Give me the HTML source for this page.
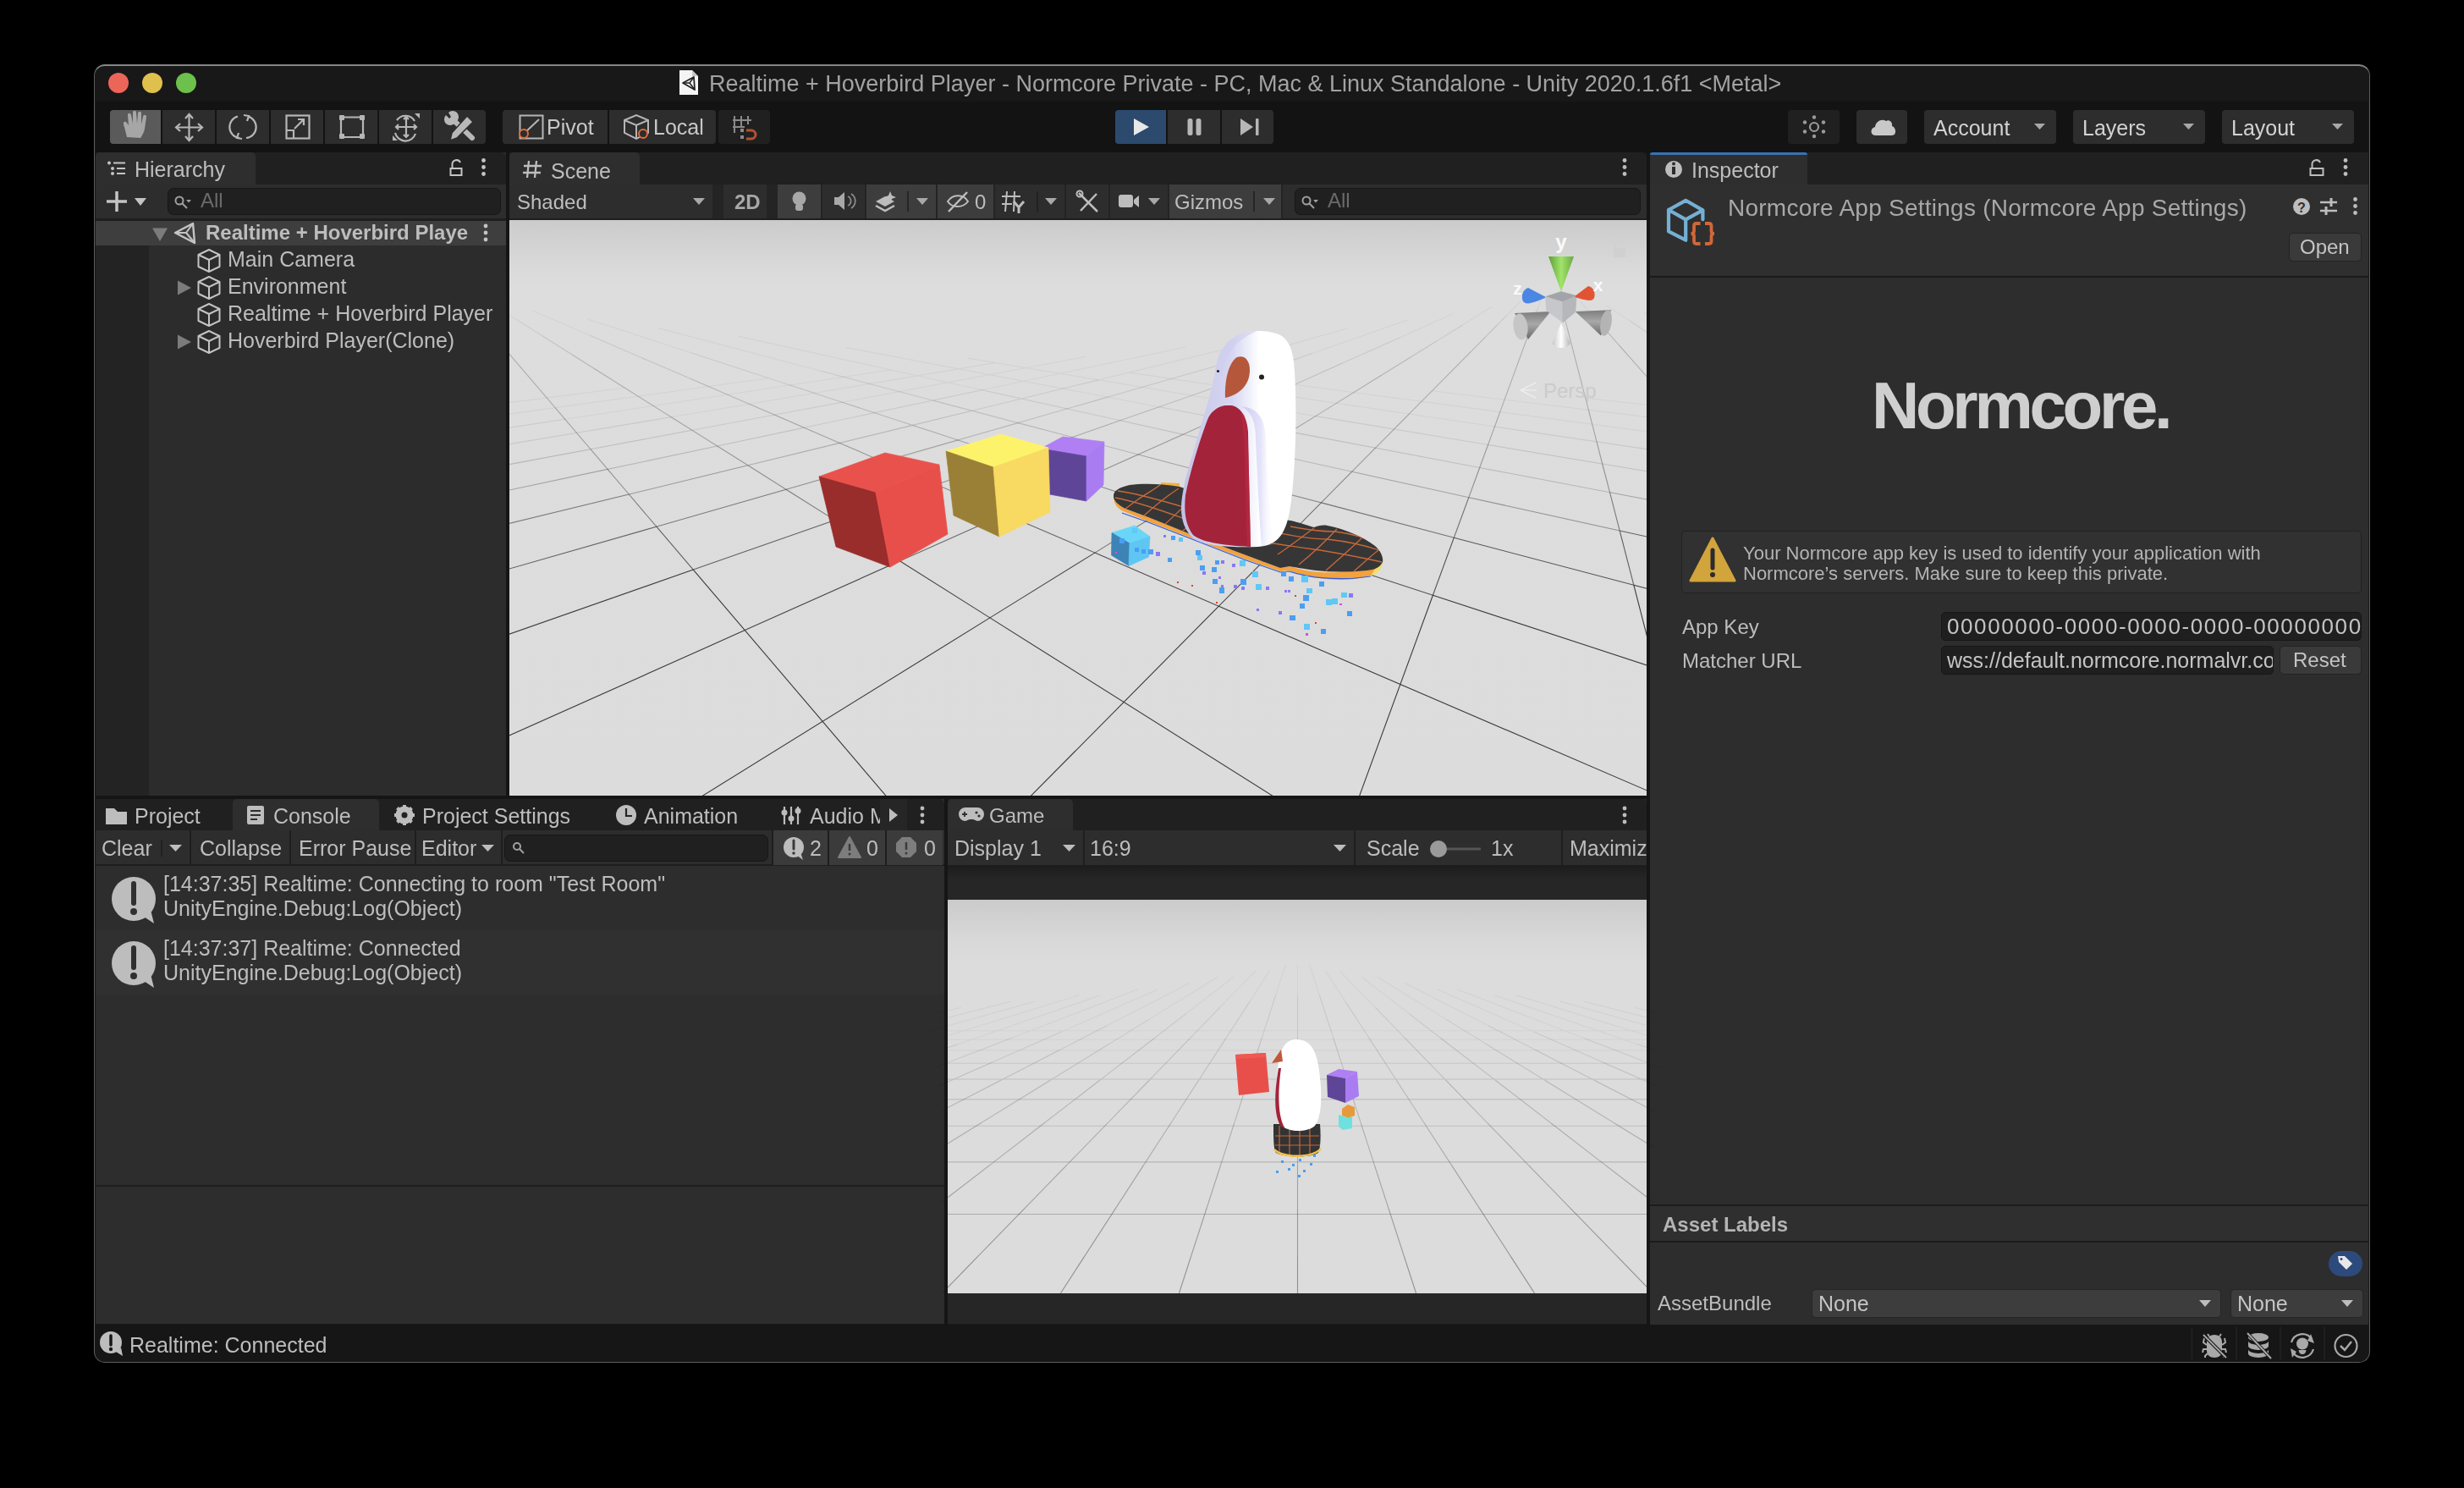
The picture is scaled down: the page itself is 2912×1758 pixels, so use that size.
<!DOCTYPE html>
<html><head><meta charset="utf-8">
<style>
*{box-sizing:border-box;margin:0;padding:0}
html,body{width:2912px;height:1758px;background:#000;overflow:hidden;font-family:"Liberation Sans",sans-serif;color:#c4c4c4;-webkit-font-smoothing:antialiased}
#root{position:absolute;left:0;top:0;width:2912px;height:1758px;transform:translateZ(0)}
.a{position:absolute}
.t{position:absolute;white-space:nowrap;font-size:25px;line-height:30px;color:#c4c4c4;filter:grayscale(1)}
.btn{position:absolute;top:130px;height:40px;background:#2d2d2d;border-radius:4px}
.tab{position:absolute;height:37px;background:#2e2e2e;border-radius:5px 5px 0 0}
svg{position:absolute;overflow:visible}
</style></head><body><div id="root">
<!-- window frame -->
<div class="a" style="left:111px;top:75.5px;width:2690px;height:1534px;border-radius:13px;background:#181818;border:1.5px solid #5c5c5c;border-top:2px solid #858585"></div>

<!-- ===== TITLEBAR ===== -->
<div class="a" style="left:128px;top:86px;width:24px;height:24px;border-radius:50%;background:#ec6559"></div>
<div class="a" style="left:168px;top:86px;width:24px;height:24px;border-radius:50%;background:#e0c04c"></div>
<div class="a" style="left:208px;top:86px;width:24px;height:24px;border-radius:50%;background:#6cc04b"></div>
<svg style="left:800px;top:80px" width="30" height="36" viewBox="800 80 30 36">
<path d="M803,83 H818 L825,90 V112 H803 Z" fill="#f4f4f4"/><path d="M818,83 V90 H825" fill="#c8c8c8"/>
<path d="M807,98 L820,91 L821,106 Z" fill="none" stroke="#222" stroke-width="1.8" stroke-linejoin="round"/>
<path d="M807,98 H815 L820,91 M815,98 L821,106" fill="none" stroke="#222" stroke-width="1.5"/>
</svg>
<div class="t" id="title" style="left:838px;top:83.5px;font-size:27px;line-height:30px;color:#a2a2a2">Realtime + Hoverbird Player - Normcore Private - PC, Mac &amp; Linux Standalone - Unity 2020.1.6f1 &lt;Metal&gt;</div>

<!-- ===== TOOLBAR ===== -->
<div class="a" style="left:113px;top:120px;width:2686px;height:60px;background:#131313"></div>
<div class="btn" style="left:130px;width:60px;background:#5a5a5a;border-radius:4px 0 0 4px"></div>
<div class="btn" style="left:192px;width:62px;border-radius:0"></div>
<div class="btn" style="left:256px;width:62px;border-radius:0"></div>
<div class="btn" style="left:320px;width:62px;border-radius:0"></div>
<div class="btn" style="left:384px;width:62px;border-radius:0"></div>
<div class="btn" style="left:448px;width:62px;border-radius:0"></div>
<div class="btn" style="left:512px;width:62px;border-radius:0 4px 4px 0"></div>
<div class="btn" style="left:594px;width:124px;border-radius:4px 0 0 4px"></div>
<div class="btn" style="left:720px;width:126px;border-radius:0 4px 4px 0"></div>
<div class="btn" style="left:849px;width:61px;background:#202020"></div>
<div class="t" style="left:646px;top:135px;font-size:25px;color:#c8c8c8">Pivot</div>
<div class="t" style="left:772px;top:135px;font-size:25px;color:#c8c8c8">Local</div>
<div class="btn" style="left:1318px;width:60px;background:#2b4a6d;border-radius:4px 0 0 4px"></div>
<div class="btn" style="left:1380px;width:62px;border-radius:0"></div>
<div class="btn" style="left:1444px;width:61px;border-radius:0 4px 4px 0"></div>
<div class="btn" style="left:2113px;width:61px;background:#202020"></div>
<div class="btn" style="left:2194px;width:60px"></div>
<div class="btn" style="left:2274px;width:156px"></div>
<div class="btn" style="left:2450px;width:156px"></div>
<div class="btn" style="left:2626px;width:156px"></div>
<div class="t" style="left:2285px;top:136px;font-size:25px;color:#d2d2d2">Account</div>
<div class="t" style="left:2461px;top:136px;font-size:25px;color:#d2d2d2">Layers</div>
<div class="t" style="left:2637px;top:136px;font-size:25px;color:#d2d2d2">Layout</div>
<svg style="left:112px;top:120px" width="2688" height="60" viewBox="112 120 2688 60">
<g fill="#a6a6a6">
<!-- hand -->
<path d="M150,162 L147,150 C145,146 146,143 149,144 L152,148 L151,136 C151,133 154,133 155,136 L157,146 L157,133 C157,130 161,130 161,133 L162,146 L163,134 C163,131 167,131 167,134 L167,147 L169,138 C169,135 173,135 173,138 L171,152 C170,157 168,160 166,163 Z"/>
</g>
<g fill="none" stroke="#b6b6b6" stroke-width="2.2">
<!-- move -->
<path d="M223.5,136 V165 M209,150.5 H238"/>
<path d="M219,140 L223.5,135 L228,140 M219,161 L223.5,166 L228,161 M213,146 L208,150.5 L213,155 M234,146 L239,150.5 L234,155"/>
<!-- rotate -->
<path d="M281,137.5 A13,13 0 0 0 283,163 M293,137.5 A13,13 0 0 1 291,163"/>
<path d="M288,136 L294,137 L292,143 M286,164 L280,163 L282,157"/>
<!-- scale -->
<rect x="338.5" y="136.5" width="27" height="27"/>
<path d="M338.5,154 H347 V163.5 M348,152 L359,141 M352,141 H359 V148"/>
<!-- rect -->
<path d="M406,138.5 H426 M406,162 H426 M403,141.5 V159 M429,141.5 V159"/>
</g>
<g fill="#b6b6b6">
<rect x="401" y="136" width="6" height="6" rx="1"/><rect x="425" y="136" width="6" height="6" rx="1"/><rect x="401" y="158" width="6" height="6" rx="1"/><rect x="425" y="158" width="6" height="6" rx="1"/>
</g>
<g fill="none" stroke="#b6b6b6" stroke-width="2.2">
<!-- transform -->
<path d="M469,142 A12.5,12.5 0 0 1 490,143 M491,158 A12.5,12.5 0 0 1 467,157"/>
<path d="M480,138 V162 M468,150 H492 M477,141 L480,138 L483,141 M477,159 L480,162 L483,159 M471,147 L468,150 L471,153 M489,147 L492,150 L489,153"/>
<path d="M490,134 L496,134 L496,140 Z M464,166 L464,160 L470,166 Z" fill="#b6b6b6" stroke="none"/>
<!-- custom tools -->
</g>
<path d="M536,142 L558,163" stroke="#b8b8b8" stroke-width="6" stroke-linecap="round"/>
<path d="M527,136 A7,7 0 0 0 537,146 L540,143 A7,7 0 0 0 530,133 L533,138 L531,140 Z" fill="#b8b8b8"/>
<path d="M552,137 L559,144 L540,163 L532,166 L534,157 Z" fill="#b8b8b8" stroke="#2d2d2d" stroke-width="1.5"/>
<g>
<!-- pivot icon -->
<rect x="614.5" y="136.5" width="27" height="27" fill="none" stroke="#b6b6b6" stroke-width="2"/>
<path d="M619,158 L637,141" stroke="#b6b6b6" stroke-width="2"/>
<circle cx="619" cy="158" r="5" fill="#2d2d2d" stroke="#e0693a" stroke-width="2"/>
<!-- local icon -->
<path d="M738,142 L752,136 L766,142 L766,157 L752,164 L738,157 Z M738,142 L752,148 L766,142 M752,148 V164" fill="none" stroke="#b6b6b6" stroke-width="2"/>
<circle cx="760" cy="158" r="5" fill="#2d2d2d" stroke="#e0693a" stroke-width="2"/>
<!-- grid snap -->
<path d="M868,137 V157 M876,137 V150 M866,142 H888 M866,150 H880 M884,137 V147" stroke="#8a8a8a" stroke-width="2" fill="none"/>
<rect x="875" y="152" width="4" height="4" fill="#8a8a8a"/><rect x="875" y="160" width="4" height="4" fill="#8a8a8a"/>
<path d="M882,154 H888 A5,5 0 0 1 888,164 H882" stroke="#b5522f" stroke-width="3" fill="none"/>
<!-- play/pause/step -->
<path d="M1340,140 L1358,150 L1340,160 Z" fill="#e8e8e8"/>
<rect x="1403.5" y="140" width="6" height="20" rx="2.5" fill="#b6b6b6"/><rect x="1413.5" y="140" width="6" height="20" rx="2.5" fill="#b6b6b6"/>
<path d="M1466,140 L1481,150 L1466,160 Z" fill="#b6b6b6"/><rect x="1484" y="140" width="3.5" height="20" rx="1" fill="#b6b6b6"/>
<!-- sun -->
<g fill="#9a9a9a"><circle cx="2144" cy="138.5" r="2.2"/><circle cx="2144" cy="161" r="2.2"/><circle cx="2133" cy="144.5" r="2.2"/><circle cx="2155" cy="144.5" r="2.2"/><circle cx="2133" cy="155.5" r="2.2"/><circle cx="2155" cy="155.5" r="2.2"/></g>
<circle cx="2144" cy="150" r="5" fill="none" stroke="#9a9a9a" stroke-width="2.2"/>
<!-- cloud -->
<path d="M2216,160 C2210,160 2210,151 2216,150 C2217,143 2224,140 2229,143 C2232,141 2237,144 2236,149 C2241,150 2242,160 2236,160 Z" fill="#c8c8c8"/>
<!-- dropdown arrows -->
<path d="M2404,146 H2417 L2410.5,153 Z M2580,146 H2593 L2586.5,153 Z M2756,146 H2769 L2762.5,153 Z" fill="#a8a8a8"/>
</svg>
<!-- ===== HIERARCHY ===== -->
<div class="a" style="left:113px;top:180px;width:485px;height:760px;background:#2c2c2c"></div>
<div class="a" style="left:113px;top:180px;width:485px;height:38px;background:#202020;border-radius:0 6px 0 0"></div>
<div class="tab" style="left:113px;top:180px;width:189px;height:38px"></div>
<div class="a" style="left:113px;top:218px;width:485px;height:41px;background:#2d2d2d"></div>
<div class="a" style="left:113px;top:258px;width:485px;height:3px;background:#1e1e1e"></div>
<div class="a" style="left:198px;top:222px;width:394px;height:32px;background:#202020;border:1.5px solid #171717;border-radius:7px"></div>
<div class="t" style="left:237px;top:222px;font-size:24px;color:#6a6a6a">All</div>
<div class="t" style="left:159px;top:185px;font-size:25px;color:#bdbdbd">Hierarchy</div>
<div class="a" style="left:113px;top:261px;width:485px;height:29px;background:#3e3e3e"></div>
<div class="a" style="left:113px;top:290px;width:63px;height:650px;background:#232323"></div>
<div class="t" style="left:243px;top:260px;font-size:24px;font-weight:bold;color:#bdbdbd">Realtime + Hoverbird Playe</div>
<div class="t" style="left:269px;top:291px;font-size:25px;color:#bdbdbd">Main Camera</div>
<div class="t" style="left:269px;top:323px;font-size:25px;color:#bdbdbd">Environment</div>
<div class="t" style="left:269px;top:355px;font-size:25px;color:#bdbdbd">Realtime + Hoverbird Player</div>
<div class="t" style="left:269px;top:387px;font-size:25px;color:#bdbdbd">Hoverbird Player(Clone)</div>
<svg style="left:112px;top:180px" width="490" height="260" viewBox="112 180 490 260">
<!-- list icon -->
<g fill="#c4c4c4"><circle cx="129" cy="192.5" r="2"/><circle cx="133" cy="199" r="2"/><circle cx="133" cy="205" r="2"/></g>
<path d="M134,192.5 H148 M138,199 H148 M138,205 H148" stroke="#c4c4c4" stroke-width="2"/>
<!-- lock -->
<path d="M532.5,207 V199 H545.5 V207 Z M534.5,199 V194 A5,5 0 0 1 544,192" fill="none" stroke="#c4c4c4" stroke-width="2"/>
<g fill="#c4c4c4"><circle cx="571.5" cy="189.5" r="2.4"/><circle cx="571.5" cy="197.5" r="2.4"/><circle cx="571.5" cy="205.5" r="2.4"/></g>
<!-- plus, arrow -->
<path d="M138,226 V250 M126,238 H150" stroke="#c4c4c4" stroke-width="3.5"/>
<path d="M159,234 H173 L166,243 Z" fill="#c4c4c4"/>
<!-- search -->
<circle cx="212" cy="237" r="4.5" fill="none" stroke="#a0a0a0" stroke-width="2"/>
<path d="M215,240 L221,246" stroke="#a0a0a0" stroke-width="2"/><path d="M220,236 H226 L223,239.5 Z" fill="#a0a0a0"/>
<!-- row0 -->
<path d="M180,269.5 H198 L189,285 Z" fill="#7c7c7c"/>
<path d="M207,275 L228,264 L230,287 Z" fill="none" stroke="#c4c4c4" stroke-width="2.4" stroke-linejoin="round"/>
<path d="M207,275 L220,275 L228,264 M220,275 L230,287" fill="none" stroke="#c4c4c4" stroke-width="2"/>
<g fill="#c4c4c4"><circle cx="574" cy="267" r="2.4"/><circle cx="574" cy="275" r="2.4"/><circle cx="574" cy="283" r="2.4"/></g>
<!-- cubes -->
<g fill="none" stroke="#c4c4c4" stroke-width="2" stroke-linejoin="round">
<path id="cb" d="M234.5,301 L247,295 L259.5,301 L259.5,315 L247,321 L234.5,315 Z M234.5,301 L247,307 L259.5,301 M247,307 V321"/>
<use href="#cb" y="32"/><use href="#cb" y="64"/><use href="#cb" y="96"/>
</g>
<path d="M210,331.5 V348.5 L226,340 Z M210,395.5 V412.5 L226,404 Z" fill="#7c7c7c"/>
</svg>

<!-- ===== SCENE ===== -->
<div class="a" style="left:602px;top:180px;width:1344px;height:38px;background:#202020;border-radius:0 6px 0 0"></div>
<div class="tab" style="left:602px;top:180px;width:154px;height:38px"></div>
<div class="t" style="left:651px;top:187px;font-size:25px;color:#bdbdbd">Scene</div>
<div class="a" style="left:602px;top:218px;width:1344px;height:40px;background:#2d2d2d"></div>
<div class="a" style="left:602px;top:258px;width:1344px;height:2px;background:#1e1e1e"></div>
<div class="a" style="left:842px;top:218px;width:13px;height:40px;background:#242424"></div>
<div class="a" style="left:906px;top:218px;width:13px;height:40px;background:#242424"></div>
<div class="a" style="left:919px;top:218px;width:51px;height:40px;background:#3d3d3d"></div>
<div class="a" style="left:970px;top:218px;width:2px;height:40px;background:#242424"></div>
<div class="a" style="left:1022px;top:218px;width:2px;height:40px;background:#242424"></div>
<div class="a" style="left:1024px;top:218px;width:82px;height:40px;background:#3d3d3d"></div>
<div class="a" style="left:1106px;top:218px;width:2px;height:40px;background:#242424"></div>
<div class="a" style="left:1108px;top:218px;width:66px;height:40px;background:#3d3d3d"></div>
<div class="a" style="left:1174px;top:218px;width:2px;height:40px;background:#242424"></div>
<div class="a" style="left:1258px;top:218px;width:2px;height:40px;background:#242424"></div>
<div class="a" style="left:1310px;top:218px;width:2px;height:40px;background:#242424"></div>
<div class="a" style="left:1380px;top:218px;width:2px;height:40px;background:#242424"></div>
<div class="a" style="left:1382px;top:218px;width:132px;height:40px;background:#3d3d3d"></div>
<div class="a" style="left:1514px;top:218px;width:2px;height:40px;background:#242424"></div>
<div class="a" style="left:1530px;top:222px;width:409px;height:32px;background:#202020;border:1.5px solid #171717;border-radius:7px"></div>
<div class="t" style="left:1569px;top:222px;font-size:24px;color:#6a6a6a">All</div>
<div class="t" style="left:611px;top:224px;font-size:24px;color:#bdbdbd">Shaded</div>
<div class="t" style="left:868px;top:224px;font-size:24px;font-weight:bold;color:#a8a8a8">2D</div>
<div class="t" style="left:1152px;top:224px;font-size:24px;color:#bdbdbd">0</div>
<div class="t" style="left:1388px;top:224px;font-size:24px;color:#bdbdbd">Gizmos</div>
<svg style="left:602px;top:180px" width="1344" height="80" viewBox="602 180 1344 80">
<!-- # icon -->
<path d="M625,190 L623,210 M634,190 L632,210 M619,196 H640 M618,204 H639" stroke="#bdbdbd" stroke-width="2.3"/>
<g fill="#bdbdbd"><circle cx="1920" cy="189.5" r="2.4"/><circle cx="1920" cy="197.5" r="2.4"/><circle cx="1920" cy="205.5" r="2.4"/></g>
<g fill="#a8a8a8">
<path d="M819,234 H833 L826,242 Z M1083,234 H1097 L1090,242 Z M1235,234 H1249 L1242,242 Z M1357,234 H1371 L1364,242 Z M1493,234 H1507 L1500,242 Z"/>
<path d="M1913,234 H1927 L1920,242 Z" opacity="0"/>
<!-- bulb -->
<circle cx="944.5" cy="234.5" r="8"/><rect x="940" y="241" width="9" height="8" rx="3"/>
<!-- audio -->
<path d="M986,233 H991 L998,227 V248 L991,242 H986 Z"/>
</g>
<path d="M1002,232 A6,6 0 0 1 1002,243 M1006,229 A10,10 0 0 1 1006,246" fill="none" stroke="#8a8a8a" stroke-width="1.8"/>
<path d="M1073,226 V250" stroke="#1e1e1e" stroke-width="1.5"/>
<path d="M1226,226 V250 M1482,226 V250" stroke="#1e1e1e" stroke-width="1.5"/>
<!-- effects -->
<path d="M1035,238 L1046,232 L1057,238 L1046,244 Z" fill="#bdbdbd"/>
<path d="M1035,243 L1046,249 L1057,243" fill="none" stroke="#bdbdbd" stroke-width="2.5"/>
<path d="M1052,226 L1054,231 L1059,233 L1054,235 L1052,240 L1050,235 L1045,233 L1050,231 Z" fill="#bdbdbd"/>
<!-- hidden eye -->
<path d="M1120,238 C1125,230 1138,228 1144,238 C1138,246 1125,246 1120,238 Z" fill="none" stroke="#bdbdbd" stroke-width="2"/>
<path d="M1121,250 L1143,227" stroke="#bdbdbd" stroke-width="2.5"/>
<!-- grid -->
<path d="M1190,226 L1188,250 M1199,226 L1198,250 M1184,232 H1206 M1184,241 H1196" stroke="#bdbdbd" stroke-width="2"/>
<path d="M1198,238 L1204,245 L1210,238 M1204,245 V252" stroke="#bdbdbd" stroke-width="3" fill="none"/>
<!-- tools -->
<path d="M1275,228 L1297,250 M1296,229 L1277,249" stroke="#bdbdbd" stroke-width="2.5"/>
<circle cx="1276" cy="229" r="3.5" fill="none" stroke="#bdbdbd" stroke-width="2"/>
<!-- camera -->
<rect x="1322" y="230" width="17" height="15" rx="3" fill="#bdbdbd"/><path d="M1340,236 L1346,231 V245 L1340,240 Z" fill="#bdbdbd"/>
<!-- search -->
<circle cx="1544" cy="237" r="4.5" fill="none" stroke="#a0a0a0" stroke-width="2"/>
<path d="M1547,240 L1553,246" stroke="#a0a0a0" stroke-width="2"/><path d="M1552,236 H1558 L1555,239.5 Z" fill="#a0a0a0"/>
</svg>
<svg style="left:602px;top:260px" width="1344" height="680" viewBox="602 260 1344 680">
<defs>
<linearGradient id="sky" x1="0" y1="260" x2="0" y2="940" gradientUnits="userSpaceOnUse">
<stop offset="0" stop-color="#cbcbcb"/><stop offset="0.085" stop-color="#dadada"/><stop offset="0.12" stop-color="#dddddd"/><stop offset="1" stop-color="#dcdcdc"/>
</linearGradient>
<linearGradient id="bodyg" x1="1395" y1="0" x2="1532" y2="0" gradientUnits="userSpaceOnUse">
<stop offset="0" stop-color="#bfbfe4"/><stop offset="0.12" stop-color="#c9c9ea"/><stop offset="0.45" stop-color="#d6d6f2"/><stop offset="0.68" stop-color="#ffffff"/><stop offset="1" stop-color="#ffffff"/>
</linearGradient>
<linearGradient id="lavg" x1="1474" y1="0" x2="1506" y2="0" gradientUnits="userSpaceOnUse"><stop offset="0" stop-color="#d2d2f4"/><stop offset="0.5" stop-color="#e4e4fa"/><stop offset="1" stop-color="#ffffff" stop-opacity="0"/></linearGradient>
<clipPath id="sc"><rect x="602" y="260" width="1344" height="680"/></clipPath>
</defs>
<g clip-path="url(#sc)">
<rect x="602" y="260" width="1344" height="680" fill="url(#sky)"/>
<path d="M600.7 371.5L612.6 378.9M630.3 367.6L696.6 396.1M693.9 376.7L817.3 417.0M778.0 387.6L970.0 438.2M872.9 397.4L1160.6 460.8M999.3 410.4L1369.9 480.7M1143.5 423.1L1554.8 491.6M1334.6 440.1L1766.4 504.0M1469.0 446.1L2011.2 518.5M1692.4 461.8L1993.4 498.4M1873.6 470.2L1978.9 481.9M536.7 484.0L738.5 458.2M538.4 498.0L908.3 446.7M667.7 495.3L1052.4 437.0M793.2 492.7L1176.2 428.6M995.3 475.2L1283.6 421.3M1160.6 460.8L1401.1 410.0M1298.3 448.9L1510.3 397.3M1441.1 431.2L1592.9 387.7M1550.0 417.8L1663.5 378.1M1653.5 399.2L1717.0 370.8M1728.5 384.0L1762.6 362.8M1781.4 371.9L1797.0 356.1M1817.8 363.6L1821.9 352.4M1846.0 363.4L1843.2 352.3M1879.7 369.7L1867.4 355.8M1927.3 379.9L1898.6 360.9M1946.0 370.7L1942.8 369.2" stroke="#1e1e1e" stroke-opacity="0.05" stroke-width="1.1" fill="none"/>
<path d="M612.6 378.9L640.7 396.6M696.6 396.1L758.4 422.7M817.3 417.0L933.6 455.0M970.0 438.2L1102.6 473.1M1160.6 460.8L1323.8 496.8M1369.9 480.7L1524.9 510.1M1554.8 491.6L1758.6 525.5M1766.4 504.0L2033.4 543.6M540.4 514.6L667.7 495.3M542.7 534.6L793.2 492.7M818.0 508.3L995.3 475.2M950.3 505.3L1160.6 460.8M1148.9 485.3L1298.3 448.9M1309.1 469.1L1441.1 431.2M1469.0 446.1L1550.0 417.8M1586.6 429.1L1653.5 399.2M1698.8 402.4L1728.5 384.0M1769.8 383.6L1781.4 371.9M1814.3 373.3L1817.8 363.6M1848.5 373.0L1846.0 363.4M1891.0 382.5L1879.7 369.7M1946.5 392.7L1927.3 379.9" stroke="#1e1e1e" stroke-opacity="0.10" stroke-width="1.1" fill="none"/>
<path d="M640.7 396.6L675.7 418.7M758.4 422.7L817.5 448.1M933.6 455.0L995.3 475.2M1102.6 473.1L1203.1 499.6M1323.8 496.8L1487.9 533.0M1524.9 510.1L1748.7 552.5M1758.6 525.5L2062.0 576.0M697.9 530.7L818.0 508.3M847.7 527.0L950.3 505.3M1078.6 502.4L1148.9 485.3M1203.1 499.6L1309.1 469.1M1369.9 480.7L1469.0 446.1M1530.3 454.2L1586.6 429.1M1667.5 421.7L1698.8 402.4M1755.5 398.1L1769.8 383.6M1810.7 383.2L1814.3 373.3M1850.5 380.6L1848.5 373.0M1900.5 393.2L1891.0 382.5" stroke="#1e1e1e" stroke-opacity="0.15" stroke-width="1.1" fill="none"/>
<path d="M675.7 418.7L701.9 435.2M817.5 448.1L885.2 477.3M995.3 475.2L1078.6 502.4M1203.1 499.6L1345.1 537.0M1487.9 533.0L1597.8 557.2M1748.7 552.5L1902.5 581.7M545.6 559.2L697.9 530.7M718.1 554.4L847.7 527.0M992.4 523.4L1078.6 502.4M1132.2 519.9L1203.1 499.6M1323.8 496.8L1369.9 480.7M1505.4 465.4L1530.3 454.2M1632.7 443.3L1667.5 421.7M1738.4 415.3L1755.5 398.1M1807.8 391.1L1810.7 383.2M1852.3 387.8L1850.5 380.6M1913.7 408.2L1900.5 393.2" stroke="#1e1e1e" stroke-opacity="0.20" stroke-width="1.1" fill="none"/>
<path d="M599.2 415.0L656.1 481.7M701.9 435.2L793.2 492.7M885.2 477.3L915.1 490.1M1078.6 502.4L1132.2 519.9M883.9 549.8L992.4 523.4M1267.4 516.5L1323.8 496.8M1441.0 494.2L1505.4 465.4M1554.8 491.6L1632.7 443.3M1665.3 489.1L1738.4 415.3M1772.8 486.6L1807.8 391.1M1877.3 484.2L1852.3 387.8M1947.8 446.8L1913.7 408.2" stroke="#1e1e1e" stroke-opacity="0.25" stroke-width="1.1" fill="none"/>
<path d="M656.1 481.7L697.9 530.7M793.2 492.7L847.7 527.0M915.1 490.1L992.4 523.4M1132.2 519.9L1197.1 541.1M1345.1 537.0L1440.8 562.2M1597.8 557.2L1735.8 587.7M1902.5 581.7L2100.2 619.2M549.2 590.1L718.1 554.4M1043.4 545.4L1132.2 519.9M1398.2 513.2L1441.0 494.2M1487.9 533.0L1554.8 491.6M1625.6 529.2L1665.3 489.1M1758.6 525.5L1772.8 486.6M1887.0 521.9L1877.3 484.2" stroke="#1e1e1e" stroke-opacity="0.30" stroke-width="1.1" fill="none"/>
<path d="M697.9 530.7L718.1 554.4M847.7 527.0L883.9 549.8M992.4 523.4L1043.4 545.4M743.3 584.0L883.9 549.8M1197.1 541.1L1267.4 516.5M1345.1 537.0L1398.2 513.2M1440.8 562.2L1487.9 533.0M1597.8 557.2L1625.6 529.2M1748.7 552.5L1758.6 525.5M1893.7 548.0L1887.0 521.9" stroke="#1e1e1e" stroke-opacity="0.35" stroke-width="1.1" fill="none"/>
<path d="M718.1 554.4L743.3 584.0M883.9 549.8L929.0 578.2M1043.4 545.4L1106.8 572.6M1197.1 541.1L1277.3 567.3M1440.8 562.2L1561.4 593.9M1735.8 587.7L1914.2 627.0M929.0 578.2L1043.4 545.4M1106.8 572.6L1197.1 541.1M1277.3 567.3L1345.1 537.0M1735.8 587.7L1748.7 552.5M1902.5 581.7L1893.7 548.0" stroke="#1e1e1e" stroke-opacity="0.40" stroke-width="1.1" fill="none"/>
<path d="M1106.8 572.6L1187.5 607.4M1277.3 567.3L1378.9 600.5M1187.5 607.4L1277.3 567.3M1378.9 600.5L1440.8 562.2M1561.4 593.9L1597.8 557.2" stroke="#1e1e1e" stroke-opacity="0.45" stroke-width="1.1" fill="none"/>
<path d="M743.3 584.0L775.8 622.2M929.0 578.2L986.8 614.6M553.9 630.1L743.3 584.0M775.8 622.2L929.0 578.2M986.8 614.6L1106.8 572.6M1914.2 627.0L1902.5 581.7" stroke="#1e1e1e" stroke-opacity="0.50" stroke-width="1.1" fill="none"/>
<path d="M1378.9 600.5L1511.9 644.0M1561.4 593.9L1718.3 635.3M1293.9 653.1L1378.9 600.5M1511.9 644.0L1561.4 593.9M1718.3 635.3L1735.8 587.7" stroke="#1e1e1e" stroke-opacity="0.55" stroke-width="1.1" fill="none"/>
<path d="M986.8 614.6L1063.4 662.8M1187.5 607.4L1293.9 653.1M1063.4 662.8L1187.5 607.4" stroke="#1e1e1e" stroke-opacity="0.60" stroke-width="1.1" fill="none"/>
<path d="M775.8 622.2L819.3 673.1M1914.2 627.0L2153.8 679.9M560.3 684.0L775.8 622.2M819.3 673.1L986.8 614.6M1930.8 691.2L1914.2 627.0" stroke="#1e1e1e" stroke-opacity="0.65" stroke-width="1.1" fill="none"/>
<path d="M1511.9 644.0L1693.4 703.3M1718.3 635.3L1930.8 691.2M1693.4 703.3L1718.3 635.3" stroke="#1e1e1e" stroke-opacity="0.70" stroke-width="1.1" fill="none"/>
<path d="M1293.9 653.1L1440.4 716.2M1440.4 716.2L1511.9 644.0" stroke="#1e1e1e" stroke-opacity="0.75" stroke-width="1.1" fill="none"/>
<path d="M1063.4 662.8L1169.9 729.9M880.3 744.6L1063.4 662.8M1169.9 729.9L1293.9 653.1" stroke="#1e1e1e" stroke-opacity="0.80" stroke-width="1.1" fill="none"/>
<path d="M583.0 877.4L606.7 1078.7M819.3 673.1L1126.3 1033.2M1169.9 729.9L1587.4 992.8M1440.4 716.2L1999.4 956.7M1693.4 703.3L1956.1 789.1M1930.8 691.2L2234.5 771.2M569.3 760.5L819.3 673.1M583.0 877.4L880.3 744.6M606.7 1078.7L1169.9 729.9M1126.3 1033.2L1440.4 716.2M1587.4 992.8L1693.4 703.3M1956.1 789.1L1930.8 691.2" stroke="#1e1e1e" stroke-opacity="0.85" stroke-width="1.1" fill="none"/>
<!-- purple cube -->
<polygon points="1230,530 1256,516 1305,522 1284,539" fill="#b07ff4" stroke="#b07ff4" stroke-width="0.7" stroke-linejoin="round"/>
<polygon points="1230,530 1284,539 1284,592 1235,583" fill="#5f4597" stroke="#5f4597" stroke-width="0.7" stroke-linejoin="round"/>
<polygon points="1284,539 1305,522 1304,573 1284,592" fill="#a97cf2" stroke="#a97cf2" stroke-width="0.7" stroke-linejoin="round"/>
<!-- yellow cube -->
<polygon points="1118,533 1183,513 1239,529 1174,552" fill="#fdf36b" stroke="#fdf36b" stroke-width="0.7" stroke-linejoin="round"/>
<polygon points="1118,533 1174,552 1181,634 1127,609" fill="#9a8036" stroke="#9a8036" stroke-width="0.7" stroke-linejoin="round"/>
<polygon points="1174,552 1239,529 1241,605 1181,634" fill="#f8d961" stroke="#f8d961" stroke-width="0.7" stroke-linejoin="round"/>
<!-- red cube -->
<polygon points="968,563 1046,535 1110,549 1035,582" fill="#e9524c" stroke="#e9524c" stroke-width="0.7" stroke-linejoin="round"/>
<polygon points="968,563 1035,582 1052,670 988,646" fill="#982d2b" stroke="#982d2b" stroke-width="0.7" stroke-linejoin="round"/>
<polygon points="1035,582 1110,549 1120,631 1052,670" fill="#e94f4a" stroke="#e94f4a" stroke-width="0.7" stroke-linejoin="round"/>
<!-- hoverboard rim + top -->
<path d="M1316,586 C1316,597 1322,602 1330,605 L1357,616 L1414,638 L1470,660 L1513,675 L1524,674 C1535,678 1545,681 1560,683 C1580,686 1600,686 1620,680 C1630,676 1634,670 1634,660 L1626,664 C1600,676 1580,677 1560,676 C1545,675 1535,672 1524,669 L1513,671 L1470,655 L1414,634 L1357,611 L1330,601 C1322,597 1317,592 1316,586 Z" fill="#f2a23f"/>
<path d="M1326,606 L1357,617 L1414,639 L1470,661 L1513,676 L1524,675 C1545,682 1580,687 1620,681" fill="none" stroke="#2f5bd8" stroke-width="1.2"/>
<path d="M1626,671 C1630,668 1634,664 1634,660 L1633,668 C1630,675 1626,678 1620,680 Z" fill="#f6e05a"/>
<path d="M1372,570 L1394,571 L1394,577 L1372,573 Z" fill="#f2b040"/>
<clipPath id="boardclip"><path id="boardtop" d="M1316,586 C1316,580 1322,576 1335,573 C1350,571 1370,571 1394,575 L1400,577 L1520,614 C1535,617 1545,621 1553,623 C1558,621 1563,620 1569,621 C1590,625 1612,635 1625,645 C1633,652 1635,660 1634,664 C1630,671 1625,673 1615,674 C1595,676 1575,676 1555,674 C1540,672 1530,670 1524,669 L1513,671 L1470,655 L1414,634 L1357,611 L1330,601 C1322,597 1316,592 1316,586 Z"/></clipPath>
<use href="#boardtop" fill="#363636"/>
<g stroke="#c8683a" stroke-width="1.3" fill="none" clip-path="url(#boardclip)">
<path d="M1318,588 C1340,592 1370,602 1400,613 M1321,580 C1345,583 1375,592 1402,600 M1330,601 L1345,590 C1355,583 1365,578 1372,572 M1350,611 C1362,600 1376,588 1393,577 M1375,621 C1385,612 1395,602 1402,596 M1395,629 L1402,624"/>
<path d="M1485,644 L1520,617 M1510,655 C1525,645 1540,633 1553,624 M1535,667 C1550,655 1566,640 1580,625 M1567,674 C1583,660 1600,645 1612,633 M1600,675 C1612,665 1625,652 1632,648"/>
<path d="M1490,639 C1520,645 1545,648 1560,650 C1590,655 1615,660 1633,664 M1512,630 C1535,634 1550,637 1568,637 C1595,640 1615,645 1630,650 M1525,622 C1545,626 1560,628 1578,628 C1600,631 1615,636 1625,641"/>
</g>
<!-- bird -->
<path d="M1485,391 C1470,391 1458,397 1450,405 C1442,414 1438,425 1436,440 C1430,470 1420,500 1410,535 C1402,560 1396,585 1396,600 C1396,615 1400,626 1410,636 C1425,646 1460,647 1487,646 C1503,645 1513,637 1518,625 C1525,610 1527,585 1529,560 C1532,520 1532,470 1530,440 C1529,420 1526,405 1515,397 C1506,392 1496,391 1485,391 Z" fill="url(#bodyg)"/>
<path d="M1450,405 C1458,397 1470,391 1485,391 C1475,396 1465,402 1458,410 C1450,420 1445,432 1444,445 L1436,440 C1438,425 1442,414 1450,405 Z" fill="#cdcdec" opacity="0.6"/>
<path d="M1466,480 C1480,486 1484,500 1484,520 C1486,560 1488,610 1491,645 L1506,643 C1500,610 1497,560 1496,520 C1495,495 1488,482 1466,480 Z" fill="url(#lavg)"/>
<path d="M1448,479 C1438,480 1430,488 1427,496 C1418,520 1407,555 1401,585 C1399,605 1401,620 1410,632 C1420,640 1440,644 1478,646 C1477,610 1476,560 1475,510 C1474,495 1468,482 1456,479 Z" fill="#a3233b"/>
<path d="M1470,490 C1474,500 1475,520 1476,560 C1477,600 1478,630 1478,646 L1474,646 C1473,620 1472,580 1471,540 C1470,515 1469,500 1466,488 Z" fill="#b82a42" opacity="0.7"/>
<path d="M1448,470 C1447,450 1452,428 1462,422 C1470,419 1477,425 1477,437 C1477,455 1465,466 1448,470 Z" fill="#b5573a"/>
<circle cx="1439.5" cy="438.5" r="1.6" fill="#222"/>
<circle cx="1491" cy="445.6" r="3" fill="#222"/>
<!-- small blue cube -->
<polygon points="1314,629.5 1341,621 1359,634 1335,642" fill="#69d6f7" stroke="#69d6f7" stroke-width="0.7" stroke-linejoin="round"/>
<polygon points="1314,629.5 1335,642 1334,668.6 1313.5,656" fill="#3d83b5" stroke="#3d83b5" stroke-width="0.7" stroke-linejoin="round"/>
<polygon points="1335,642 1359,634 1357.5,658 1334,668.6" fill="#5ec6f3" stroke="#5ec6f3" stroke-width="0.7" stroke-linejoin="round"/>
<!-- particles -->
<g fill="#4b9ef2">
<rect x="1384" y="633" width="5" height="5"/><rect x="1413" y="650" width="6" height="6"/><rect x="1380" y="659" width="5" height="5"/><rect x="1357" y="649" width="6" height="6"/><rect x="1349" y="649" width="5" height="5"/><rect x="1418" y="668" width="6" height="6"/><rect x="1432" y="670" width="6" height="6"/><rect x="1436" y="662" width="5" height="5"/><rect x="1466" y="684" width="7" height="7"/><rect x="1433" y="684" width="6" height="6"/><rect x="1441" y="694" width="6" height="7"/><rect x="1514" y="675" width="6" height="6"/><rect x="1523" y="681" width="6" height="6"/><rect x="1559" y="687" width="6" height="6"/><rect x="1540" y="703" width="7" height="7"/><rect x="1536" y="713" width="6" height="6"/><rect x="1592" y="722" width="6" height="6"/><rect x="1524" y="727" width="7" height="6"/><rect x="1561" y="743" width="6" height="6"/><rect x="1323" y="636" width="6" height="6"/><rect x="1341" y="647" width="5" height="5"/>
</g>
<g fill="#5ec8f6">
<rect x="1393" y="635" width="5" height="5"/><rect x="1415" y="656" width="6" height="6"/><rect x="1465" y="662" width="7" height="7"/><rect x="1480" y="675" width="7" height="7"/><rect x="1484" y="690" width="7" height="7"/><rect x="1538" y="680" width="8" height="8"/><rect x="1544" y="695" width="7" height="6"/><rect x="1585" y="700" width="7" height="6"/><rect x="1567" y="708" width="7" height="7"/><rect x="1574" y="707" width="7" height="7"/><rect x="1541" y="737" width="7" height="7"/><rect x="1338" y="624" width="6" height="6"/>
</g>
<g fill="#8a78f2">
<rect x="1375" y="632" width="3" height="3"/><rect x="1366" y="652" width="5" height="5"/><rect x="1421" y="675" width="4" height="4"/><rect x="1443" y="662" width="4" height="4"/><rect x="1456" y="666" width="4" height="4"/><rect x="1440" y="681" width="3" height="3"/><rect x="1443" y="691" width="3" height="3"/><rect x="1458" y="691" width="4" height="4"/><rect x="1467" y="693" width="4" height="4"/><rect x="1496" y="693" width="4" height="4"/><rect x="1594" y="701" width="5" height="5"/><rect x="1511" y="722" width="4" height="4"/><rect x="1485" y="719" width="3" height="3"/><rect x="1518" y="697" width="3" height="3"/><rect x="1522" y="697" width="3" height="3"/>
</g>
<g fill="#e0402c"><rect x="1391" y="687" width="2" height="2"/><rect x="1408" y="691" width="2" height="2"/><rect x="1437" y="711" width="2" height="2"/><rect x="1530" y="703" width="2" height="2"/><rect x="1554" y="735" width="2" height="2"/></g>
<g fill="#d050e8"><rect x="1583" y="713" width="3" height="2"/><rect x="1543" y="748" width="3" height="3"/><rect x="1318" y="652" width="2" height="2"/></g>
<!-- gizmo -->
<defs>
<linearGradient id="gz1" x1="0" y1="0" x2="0" y2="1"><stop offset="0" stop-color="#7c7c7c"/><stop offset="0.45" stop-color="#a8a8a8"/><stop offset="1" stop-color="#6a6a6a"/></linearGradient>
<linearGradient id="gz2" x1="0" y1="0" x2="1" y2="0"><stop offset="0" stop-color="#c8c8c8"/><stop offset="0.5" stop-color="#ffffff"/><stop offset="1" stop-color="#b8b8b8"/></linearGradient>
<linearGradient id="gzg" x1="0" y1="0" x2="1" y2="0"><stop offset="0" stop-color="#5f9e3a"/><stop offset="0.5" stop-color="#a0e46a"/><stop offset="1" stop-color="#6aa844"/></linearGradient>
</defs>
<path d="M1832.5,368 L1790,370 L1806,401 Z" fill="url(#gz1)"/>
<ellipse cx="1797" cy="386" rx="8.5" ry="15.5" fill="#c6c6c6" transform="rotate(-8 1797 386)"/>
<path d="M1861.7,368 L1904,366.3 L1892,396.5 Z" fill="url(#gz1)"/>
<ellipse cx="1898" cy="381.5" rx="6.5" ry="15.5" fill="#b4b4b4" transform="rotate(10 1898 381.5)"/>
<path d="M1845,382 L1834.5,405 C1836,413 1854,413 1855.7,405 Z" fill="url(#gz2)"/>
<polygon points="1845,344.6 1863.2,349.6 1846.6,356.7 1826.5,350.6" fill="#a2a4aa" stroke="#a2a4aa" stroke-width="0.7" stroke-linejoin="round"/>
<polygon points="1826.5,350.6 1846.6,356.7 1847,381 1827.5,366.8" fill="#c6c7cb" stroke="#c6c7cb" stroke-width="0.7" stroke-linejoin="round"/>
<polygon points="1846.6,356.7 1863.2,349.6 1861.7,368.8 1847,381" fill="#b6b7bb" stroke="#b6b7bb" stroke-width="0.7" stroke-linejoin="round"/>
<path d="M1845,344.6 L1830,303 L1860,303 Z" fill="url(#gzg)"/>
<path d="M1826,350.6 L1806,340 C1800,342 1797,350 1800,356 C1803,360 1808,359.5 1826,352 Z" fill="#4a86e4"/>
<path d="M1861.7,349.6 L1877,338 C1883,339 1886,346 1884,352 C1882,356 1877,356 1861.7,351 Z" fill="#e05434"/>
<text x="1845" y="294" font-family="Liberation Sans" font-weight="bold" font-size="24" fill="#fafafa" text-anchor="middle">y</text>
<text x="1793.5" y="348" font-family="Liberation Sans" font-weight="bold" font-size="21" fill="#fafafa" text-anchor="middle">z</text>
<text x="1888.5" y="344" font-family="Liberation Sans" font-weight="bold" font-size="21" fill="#fafafa" text-anchor="middle">x</text>
<path d="M1815,452 L1797,461 L1815,470 M1797,461 H1816" fill="none" stroke="#ececec" stroke-width="1.6"/>
<text x="1824" y="470" font-family="Liberation Sans" font-size="24" fill="#cbcbcb">Persp</text>
<rect x="1907" y="293" width="14" height="11" rx="1" fill="#d0d0d0"/><path d="M1909,293 V289 A4.5,4.5 0 0 1 1918,288" fill="none" stroke="#d0d0d0" stroke-width="1.5"/>
</g>
</svg>

<!-- ===== INSPECTOR ===== -->
<div class="a" style="left:1950px;top:180px;width:849px;height:1386px;background:#2d2d2d"></div>
<div class="a" style="left:1950px;top:180px;width:849px;height:38px;background:#202020"></div>
<div class="tab" style="left:1950px;top:180px;width:186px;height:38px"></div>
<div class="a" style="left:1950px;top:180px;width:186px;height:3px;background:#3a72b0;border-radius:3px 3px 0 0"></div>
<div class="t" style="left:1999px;top:186px;font-size:25px;color:#bdbdbd">Inspector</div>
<div class="a" style="left:1950px;top:218px;width:849px;height:107px;background:#2f2f2f"></div>
<div class="a" style="left:1950px;top:325.5px;width:849px;height:2.5px;background:#1a1a1a"></div>
<div class="t" style="left:2042px;top:230.5px;font-size:28px;letter-spacing:0.25px;color:#a8a8a8">Normcore App Settings (Normcore App Settings)</div>
<div class="a" style="left:2705px;top:275px;width:86px;height:34px;background:#3a3a3a;border:1.5px solid #232323;border-radius:5px"></div>
<div class="t" style="left:2718px;top:277px;font-size:24px;color:#c4c4c4">Open</div>
<div class="t" style="left:2212px;top:464px;font-size:78px;font-weight:bold;letter-spacing:-4.3px;color:#cfcfcf">Normcore.</div>
<div class="a" style="left:1987px;top:627px;width:804px;height:74px;background:#313131;border:1.5px solid #222222;border-radius:5px"></div>
<div class="t" style="left:2060px;top:639px;font-size:22px;color:#b4b4b4">Your Normcore app key is used to identify your application with</div>
<div class="t" style="left:2060px;top:663px;font-size:22px;color:#b4b4b4">Normcore’s servers. Make sure to keep this private.</div>
<div class="t" style="left:1988px;top:726px;font-size:24px;color:#bdbdbd">App Key</div>
<div class="t" style="left:1988px;top:766px;font-size:24px;color:#bdbdbd">Matcher URL</div>
<div class="a" style="left:2294px;top:723px;width:497px;height:34px;background:#1f1f1f;border:1.5px solid #171717;border-radius:5px;overflow:hidden"><div class="t" style="left:6px;top:1px;font-size:26px;letter-spacing:1.6px;color:#c4c4c4">00000000-0000-0000-0000-000000000000</div></div>
<div class="a" style="left:2294px;top:763px;width:393px;height:34px;background:#1f1f1f;border:1.5px solid #171717;border-radius:5px;overflow:hidden"><div class="t" style="left:6px;top:1px;font-size:25px;color:#c4c4c4">wss://default.normcore.normalvr.com</div></div>
<div class="a" style="left:2694px;top:763px;width:97px;height:34px;background:#3a3a3a;border:1.5px solid #232323;border-radius:5px"></div>
<div class="t" style="left:2710px;top:765px;font-size:24px;color:#c4c4c4">Reset</div>
<!-- asset labels -->
<div class="a" style="left:1950px;top:1423px;width:849px;height:2px;background:#1c1c1c"></div>
<div class="a" style="left:1950px;top:1425px;width:849px;height:42px;background:#2f2f2f"></div>
<div class="a" style="left:1950px;top:1466px;width:849px;height:2px;background:#1c1c1c"></div>
<div class="t" style="left:1965px;top:1432px;font-size:24px;font-weight:bold;color:#b4b4b4">Asset Labels</div>
<div class="a" style="left:2752px;top:1478px;width:40px;height:30px;background:#2c4a7c;border-radius:15px"></div>
<div class="t" style="left:1959px;top:1525px;font-size:24px;color:#bdbdbd">AssetBundle</div>
<div class="a" style="left:2141px;top:1523px;width:484px;height:34px;background:#3d3d3d;border:1.5px solid #262626;border-radius:5px"></div>
<div class="a" style="left:2636px;top:1523px;width:157px;height:34px;background:#3d3d3d;border:1.5px solid #262626;border-radius:5px"></div>
<div class="t" style="left:2149px;top:1525px;font-size:25px;color:#c4c4c4">None</div>
<div class="t" style="left:2644px;top:1525px;font-size:25px;color:#c4c4c4">None</div>
<svg style="left:1950px;top:180px" width="850" height="1430" viewBox="1950 180 850 1430">
<circle cx="1978" cy="200" r="10" fill="#bdbdbd"/><rect x="1976" y="197" width="4" height="9" fill="#2e2e2e"/><circle cx="1978" cy="193.5" r="2" fill="#2e2e2e"/>
<path d="M2730.5,207 V199 H2745.5 V207 Z M2732.5,199 V194 A5,5 0 0 1 2742,192" fill="none" stroke="#bdbdbd" stroke-width="2"/>
<g fill="#bdbdbd"><circle cx="2772" cy="189.5" r="2.4"/><circle cx="2772" cy="197.5" r="2.4"/><circle cx="2772" cy="205.5" r="2.4"/></g>
<!-- asset icon -->
<path d="M2012.4,259.3 V248.4 L1992.2,236.8 L1972,248 V273.4 L1992.2,283.7 V259.3 L2012.4,248.4 M1972,248 L1992.2,259.3" fill="none" stroke="#74b0d4" stroke-width="4.2" stroke-linejoin="round" stroke-linecap="round"/>
<path d="M2009.5,264 H2005 Q2002,264 2002,267 V273 Q2002,276 1999,276 H1998.5 M1999,276 Q2002,276 2002,279 V285 Q2002,288 2005,288 H2009.5 M2015,264 H2019.5 Q2022.5,264 2022.5,267 V273 Q2022.5,276 2025.5,276 H2026 M2025.5,276 Q2022.5,276 2022.5,279 V285 Q2022.5,288 2019.5,288 H2015" fill="none" stroke="#d0673a" stroke-width="3.8"/>
<!-- header icons -->
<circle cx="2720" cy="244" r="10" fill="#bdbdbd"/><text x="2720" y="251" font-family="Liberation Sans" font-weight="bold" font-size="16" fill="#2f2f2f" text-anchor="middle">?</text>
<path d="M2742,239 H2762 M2742,249 H2762" stroke="#bdbdbd" stroke-width="2.5"/><path d="M2755,234 V244 M2749,244 V254" stroke="#bdbdbd" stroke-width="3"/>
<g fill="#bdbdbd"><circle cx="2783.5" cy="235.5" r="2.4"/><circle cx="2783.5" cy="243.5" r="2.4"/><circle cx="2783.5" cy="251.5" r="2.4"/></g>
<!-- warning -->
<path d="M2024,636 L2050,686 H1998 Z" fill="#d2a43c" stroke="#d2a43c" stroke-width="3" stroke-linejoin="round"/>
<path d="M2024,650 V671" stroke="#2b2b2b" stroke-width="5" stroke-linecap="round"/><circle cx="2024" cy="679" r="3" fill="#2b2b2b"/>
<!-- tag -->
<path d="M2763,1484 H2771 L2780,1493 L2773,1500 L2764,1491 Z" fill="#e8e8e8"/><circle cx="2767" cy="1487.5" r="1.5" fill="#2c4a7c"/>
<path d="M2599,1536 H2613 L2606,1544 Z M2767,1536 H2781 L2774,1544 Z" fill="#bdbdbd"/>
</svg>

<!-- ===== CONSOLE ===== -->
<div class="a" style="left:113px;top:944px;width:1003px;height:620px;background:#2d2d2d"></div>
<div class="a" style="left:113px;top:944px;width:1003px;height:37px;background:#202020;border-radius:0 6px 0 0"></div>
<div class="tab" style="left:275px;top:944px;width:173px;height:37px"></div>
<div class="a" style="left:1040px;top:944px;width:32px;height:37px;background:#262626"></div>
<div class="t" style="left:159px;top:949px;font-size:25px;color:#bdbdbd">Project</div>
<div class="t" style="left:323px;top:949px;font-size:25px;color:#bdbdbd">Console</div>
<div class="t" style="left:499px;top:949px;font-size:25px;color:#bdbdbd">Project Settings</div>
<div class="t" style="left:761px;top:949px;font-size:25px;color:#bdbdbd">Animation</div>
<div class="a" style="left:957px;top:944px;width:83px;height:37px;overflow:hidden"><div class="t" style="left:0;top:5px;font-size:25px;color:#bdbdbd">Audio Mixer</div></div>
<div class="a" style="left:113px;top:981px;width:1003px;height:41px;background:#2d2d2d"></div>
<div class="a" style="left:113px;top:1021px;width:1003px;height:2px;background:#1e1e1e"></div>
<div class="a" style="left:224px;top:981px;width:2px;height:41px;background:#1e1e1e"></div>
<div class="a" style="left:342px;top:981px;width:2px;height:41px;background:#1e1e1e"></div>
<div class="a" style="left:490px;top:981px;width:2px;height:41px;background:#1e1e1e"></div>
<div class="a" style="left:592px;top:981px;width:2px;height:41px;background:#1e1e1e"></div>
<div class="a" style="left:912px;top:981px;width:2px;height:41px;background:#1e1e1e"></div>
<div class="a" style="left:914px;top:981px;width:64px;height:41px;background:#3b3b3b"></div>
<div class="a" style="left:978px;top:981px;width:2px;height:41px;background:#1e1e1e"></div>
<div class="a" style="left:980px;top:981px;width:66px;height:41px;background:#3b3b3b"></div>
<div class="a" style="left:1046px;top:981px;width:2px;height:41px;background:#1e1e1e"></div>
<div class="a" style="left:1048px;top:981px;width:66px;height:41px;background:#3b3b3b"></div>
<div class="a" style="left:596px;top:986px;width:312px;height:32px;background:#202020;border:1.5px solid #171717;border-radius:7px"></div>
<div class="t" style="left:120px;top:987px;font-size:25px;color:#bdbdbd">Clear</div>
<div class="t" style="left:236px;top:987px;font-size:25px;color:#bdbdbd">Collapse</div>
<div class="t" style="left:353px;top:987px;font-size:25px;color:#bdbdbd">Error Pause</div>
<div class="t" style="left:498px;top:987px;font-size:25px;color:#bdbdbd">Editor</div>
<div class="t" style="left:957px;top:987px;font-size:25px;color:#bdbdbd">2</div>
<div class="t" style="left:1024px;top:987px;font-size:25px;color:#bdbdbd">0</div>
<div class="t" style="left:1092px;top:987px;font-size:25px;color:#bdbdbd">0</div>
<div class="a" style="left:113px;top:1099px;width:1003px;height:76px;background:#303030"></div>
<div class="a" style="left:113px;top:1400px;width:1003px;height:2px;background:#1e1e1e"></div>
<div class="t" style="left:193px;top:1029px;font-size:25px;color:#bdbdbd">[14:37:35] Realtime: Connecting to room "Test Room"</div>
<div class="t" style="left:193px;top:1058px;font-size:25px;color:#bdbdbd">UnityEngine.Debug:Log(Object)</div>
<div class="t" style="left:193px;top:1105px;font-size:25px;color:#bdbdbd">[14:37:37] Realtime: Connected</div>
<div class="t" style="left:193px;top:1134px;font-size:25px;color:#bdbdbd">UnityEngine.Debug:Log(Object)</div>
<svg style="left:112px;top:940px" width="1010" height="260" viewBox="112 940 1010 260">
<!-- folder -->
<path d="M125,955 H135 L139,959 H150 V974 H125 Z" fill="#bdbdbd"/>
<!-- console icon -->
<rect x="292" y="952" width="20" height="22" rx="2" fill="#bdbdbd"/><path d="M296,958 H308 M296,963 H308 M296,968 H304" stroke="#2e2e2e" stroke-width="2"/>
<!-- gear -->
<circle cx="478" cy="963" r="8" fill="none" stroke="#bdbdbd" stroke-width="5"/>
<path d="M478,951 V975 M466,963 H490 M469.5,954.5 L486.5,971.5 M486.5,954.5 L469.5,971.5" stroke="#bdbdbd" stroke-width="4"/>
<circle cx="478" cy="963" r="3.5" fill="#232323"/>
<!-- clock -->
<circle cx="740" cy="963" r="12" fill="#bdbdbd"/><path d="M740,955 V964 H747" stroke="#232323" stroke-width="2.2" fill="none"/>
<!-- audio mixer -->
<path d="M927,953 V974 M935,953 V974 M943,953 V974" stroke="#bdbdbd" stroke-width="2.2"/>
<g fill="#bdbdbd"><circle cx="927" cy="960" r="3.5"/><circle cx="935" cy="967" r="3.5"/><circle cx="943" cy="958" r="3.5"/></g>
<path d="M1051,955 L1061,963 L1051,971 Z" fill="#bdbdbd"/>
<g fill="#bdbdbd"><circle cx="1090" cy="955" r="2.4"/><circle cx="1090" cy="963" r="2.4"/><circle cx="1090" cy="971" r="2.4"/></g>
<!-- toolbar -->
<path d="M191,992 V1012" stroke="#1e1e1e" stroke-width="1.5"/>
<path d="M200,998 H215 L207.5,1006 Z M569,998 H584 L576.5,1006 Z" fill="#bdbdbd"/>
<circle cx="611" cy="1000" r="4" fill="none" stroke="#a0a0a0" stroke-width="2"/><path d="M614,1003 L619,1008" stroke="#a0a0a0" stroke-width="2"/>
<!-- count icons -->
<circle cx="938" cy="1001" r="12" fill="#bdbdbd"/><path d="M941,1010 L949,1016 L946,1007 Z" fill="#bdbdbd"/>
<path d="M938,993 V1003" stroke="#3b3b3b" stroke-width="3" stroke-linecap="round"/><circle cx="938" cy="1008" r="1.8" fill="#3b3b3b"/>
<path d="M1004,989 L1017,1013 H991 Z" fill="#7d7d7d" stroke="#7d7d7d" stroke-width="2" stroke-linejoin="round"/>
<path d="M1004,997 V1005" stroke="#3b3b3b" stroke-width="2.5"/><circle cx="1004" cy="1009" r="1.5" fill="#3b3b3b"/>
<path d="M1066,989 H1076 L1083,996 V1006 L1076,1013 H1066 L1059,1006 V996 Z" fill="#7d7d7d"/>
<path d="M1071,995 V1004" stroke="#3b3b3b" stroke-width="2.5"/><circle cx="1071" cy="1008" r="1.5" fill="#3b3b3b"/>
<!-- log icons -->
<g id="logi">
<circle cx="158" cy="1062" r="26" fill="#bdbdbd"/><path d="M170,1083 L182,1091 L178,1075 Z" fill="#bdbdbd"/>
<path d="M158,1044 V1067" stroke="#303030" stroke-width="6" stroke-linecap="round"/><circle cx="158" cy="1077" r="4" fill="#303030"/>
</g>
<use href="#logi" y="76"/>
</svg>

<!-- ===== GAME ===== -->
<div class="a" style="left:1120px;top:944px;width:826px;height:620px;background:#262626"></div>
<div class="a" style="left:1120px;top:944px;width:826px;height:37px;background:#202020;border-radius:0 6px 0 0"></div>
<div class="tab" style="left:1120px;top:944px;width:148px;height:37px"></div>
<div class="t" style="left:1169px;top:949px;font-size:24px;color:#bdbdbd">Game</div>
<div class="a" style="left:1120px;top:981px;width:826px;height:41px;background:#2d2d2d"></div>
<div class="a" style="left:1280px;top:981px;width:2px;height:41px;background:#1e1e1e"></div>
<div class="a" style="left:1600px;top:981px;width:2px;height:41px;background:#1e1e1e"></div>
<div class="a" style="left:1845px;top:981px;width:2px;height:41px;background:#1e1e1e"></div>
<div class="a" style="left:1120px;top:1022px;width:826px;height:41px;background:linear-gradient(#1c1c1c,#262626 40%)"></div>
<div class="t" style="left:1128px;top:987px;font-size:25px;color:#bdbdbd">Display 1</div>
<div class="t" style="left:1288px;top:987px;font-size:25px;color:#bdbdbd">16:9</div>
<div class="t" style="left:1615px;top:987px;font-size:25px;color:#bdbdbd">Scale</div>
<div class="t" style="left:1762px;top:987px;font-size:25px;color:#bdbdbd">1x</div>
<div class="a" style="left:1855px;top:981px;width:91px;height:41px;overflow:hidden"><div class="t" style="left:0;top:6px;font-size:25px;color:#bdbdbd">Maximize</div></div>
<svg style="left:1120px;top:940px" width="830" height="90" viewBox="1120 940 830 90">
<path d="M1141,954 H1155 A7,7 0 0 1 1155,970 L1150,968 H1146 L1141,970 A7,7 0 0 1 1141,954 Z" fill="#bdbdbd"/>
<path d="M1140,959 V965 M1137,962 H1143" stroke="#2e2e2e" stroke-width="1.8"/><circle cx="1154" cy="960" r="1.6" fill="#2e2e2e"/><circle cx="1157" cy="964" r="1.6" fill="#2e2e2e"/>
<g fill="#bdbdbd"><circle cx="1920" cy="955" r="2.4"/><circle cx="1920" cy="963" r="2.4"/><circle cx="1920" cy="971" r="2.4"/></g>
<path d="M1256,998 H1271 L1263.5,1006 Z M1576,998 H1591 L1583.5,1006 Z" fill="#bdbdbd"/>
<path d="M1700,1003 H1750" stroke="#555" stroke-width="3"/><circle cx="1700" cy="1003" r="10" fill="#9a9a9a"/>
</svg>

<svg style="left:1120px;top:1063px" width="826" height="465" viewBox="1120 1063 826 465">
<defs>
<linearGradient id="gsky" x1="0" y1="1063" x2="0" y2="1528" gradientUnits="userSpaceOnUse">
<stop offset="0" stop-color="#cbcbcb"/><stop offset="0.1" stop-color="#d8d8d8"/><stop offset="0.16" stop-color="#dcdcdc"/><stop offset="1" stop-color="#dcdcdc"/>
</linearGradient>
</defs>
<rect x="1120" y="1063" width="826" height="465" fill="url(#gsky)"/>
<path d="M1120.0 1240.9L1946.0 1240.9M1120.0 1228.3L1946.0 1228.3M1120.0 1217.7L1946.0 1217.7M1106.0 1197.4L1136.3 1190.2M1110.9 1204.6L1194.8 1183.1M1094.9 1219.0L1223.0 1183.1M1111.5 1226.2L1274.6 1175.9M1132.7 1233.4L1300.5 1175.9M1195.9 1226.2L1345.0 1168.7M1254.4 1219.0L1368.6 1168.7M1308.2 1211.8L1406.1 1161.5M1357.4 1204.6L1439.0 1154.3M1402.0 1197.4L1457.9 1154.3M1441.8 1190.2L1483.8 1147.1M1477.1 1183.1L1500.4 1147.1M1507.6 1175.9L1519.3 1139.9M1533.5 1175.9L1533.5 1139.9M1559.4 1175.9L1547.7 1139.9M1589.9 1183.1L1566.6 1147.1M1625.2 1190.2L1583.2 1147.1M1665.0 1197.4L1609.1 1154.3M1709.6 1204.6L1628.0 1154.3M1758.8 1211.8L1660.9 1161.5M1812.6 1219.0L1698.4 1168.7M1871.1 1226.2L1722.0 1168.7M1934.3 1233.4L1766.5 1175.9M1955.5 1226.2L1792.4 1175.9M1946.5 1211.8L1844.0 1183.1M1956.1 1204.6L1872.2 1183.1M1961.0 1197.4L1930.7 1190.2" stroke="#1e1e1e" stroke-opacity="0.05" stroke-width="1.1" fill="none"/>
<path d="M1120.0 1256.2L1946.0 1256.2M1111.7 1240.5L1132.7 1233.4M1102.7 1262.1L1195.9 1226.2M1172.8 1254.9L1254.4 1219.0M1252.3 1240.5L1308.2 1211.8M1310.8 1233.4L1357.4 1204.6M1364.7 1226.2L1402.0 1197.4M1406.9 1226.2L1441.8 1190.2M1449.1 1226.2L1477.1 1183.1M1491.3 1226.2L1507.6 1175.9M1533.5 1226.2L1533.5 1175.9M1575.7 1226.2L1559.4 1175.9M1617.9 1226.2L1589.9 1183.1M1660.1 1226.2L1625.2 1190.2M1702.3 1226.2L1665.0 1197.4M1756.2 1233.4L1709.6 1204.6M1814.7 1240.5L1758.8 1211.8M1894.2 1254.9L1812.6 1219.0M1964.3 1262.1L1871.1 1226.2M1955.3 1240.5L1934.3 1233.4" stroke="#1e1e1e" stroke-opacity="0.10" stroke-width="1.1" fill="none"/>
<path d="M1120.0 1330.2L1946.0 1330.2M1120.0 1298.9L1946.0 1298.9M1120.0 1275.0L1946.0 1275.0M1107.6 1283.7L1172.8 1254.9M1182.4 1276.5L1252.3 1240.5M1240.9 1276.5L1310.8 1233.4M1299.4 1276.5L1364.7 1226.2M1358.0 1276.5L1406.9 1226.2M1416.5 1276.5L1449.1 1226.2M1475.0 1276.5L1491.3 1226.2M1533.5 1276.5L1533.5 1226.2M1592.0 1276.5L1575.7 1226.2M1650.5 1276.5L1617.9 1226.2M1709.0 1276.5L1660.1 1226.2M1767.6 1276.5L1702.3 1226.2M1826.1 1276.5L1756.2 1233.4M1884.6 1276.5L1814.7 1240.5M1959.4 1283.7L1894.2 1254.9" stroke="#1e1e1e" stroke-opacity="0.15" stroke-width="1.1" fill="none"/>
<path d="M1120.0 1372.9L1946.0 1372.9M1112.5 1312.4L1182.4 1276.5M1159.4 1326.8L1240.9 1276.5M1234.2 1326.8L1299.4 1276.5M1309.0 1326.8L1358.0 1276.5M1383.9 1326.8L1416.5 1276.5M1458.7 1326.8L1475.0 1276.5M1533.5 1326.8L1533.5 1276.5M1608.3 1326.8L1592.0 1276.5M1683.1 1326.8L1650.5 1276.5M1758.0 1326.8L1709.0 1276.5M1832.8 1326.8L1767.6 1276.5M1907.6 1326.8L1826.1 1276.5M1954.5 1312.4L1884.6 1276.5" stroke="#1e1e1e" stroke-opacity="0.20" stroke-width="1.1" fill="none"/>
<path d="M1120.0 1434.5L1946.0 1434.5M1112.8 1355.5L1159.4 1326.8M1169.0 1377.1L1234.2 1326.8M1260.1 1377.1L1309.0 1326.8M1351.2 1377.1L1383.9 1326.8M1442.4 1377.1L1458.7 1326.8M1533.5 1377.1L1533.5 1326.8M1624.6 1377.1L1608.3 1326.8M1715.8 1377.1L1683.1 1326.8M1806.9 1377.1L1758.0 1326.8M1898.0 1377.1L1832.8 1326.8M1954.2 1355.5L1907.6 1326.8" stroke="#1e1e1e" stroke-opacity="0.25" stroke-width="1.1" fill="none"/>
<path d="M1113.0 1420.2L1169.0 1377.1M1211.2 1427.4L1260.1 1377.1M1318.6 1427.4L1351.2 1377.1M1426.1 1427.4L1442.4 1377.1M1533.5 1427.4L1533.5 1377.1M1640.9 1427.4L1624.6 1377.1M1748.4 1427.4L1715.8 1377.1M1855.8 1427.4L1806.9 1377.1M1954.0 1420.2L1898.0 1377.1" stroke="#1e1e1e" stroke-opacity="0.30" stroke-width="1.1" fill="none"/>
<path d="M1155.2 1484.9L1211.2 1427.4M1281.3 1484.9L1318.6 1427.4M1407.4 1484.9L1426.1 1427.4M1533.5 1484.9L1533.5 1427.4M1659.6 1484.9L1640.9 1427.4M1785.7 1484.9L1748.4 1427.4M1911.8 1484.9L1855.8 1427.4" stroke="#1e1e1e" stroke-opacity="0.35" stroke-width="1.1" fill="none"/>
<path d="M1113.3 1528.0L1155.2 1484.9M1253.4 1528.0L1281.3 1484.9M1393.4 1528.0L1407.4 1484.9M1533.5 1528.0L1533.5 1484.9M1673.6 1528.0L1659.6 1484.9M1813.6 1528.0L1785.7 1484.9M1946.7 1520.8L1911.8 1484.9" stroke="#1e1e1e" stroke-opacity="0.40" stroke-width="1.1" fill="none"/>
<polygon points="1460,1246 1496,1244 1500,1290 1464,1294" fill="#e94f4a"/>
<polygon points="1460,1246 1496,1244 1496,1249 1461,1251" fill="#ee5a52"/>
<polygon points="1568,1270 1582,1263 1604,1266 1590,1274" fill="#b07ff4"/>
<polygon points="1568,1270 1590,1274 1590,1303 1569,1296" fill="#5f4597"/>
<polygon points="1590,1274 1604,1266 1606,1295 1590,1303" fill="#a97cf2"/>
<polygon points="1586,1310 1593,1305 1601,1308 1601,1318 1594,1321 1586,1318" fill="#e79a3c"/>
<polygon points="1582,1317 1594,1321 1598,1318 1598,1333 1587,1335 1582,1331" fill="#6ee0e0"/>
<path d="M1505,1328 C1505,1345 1505,1358 1508,1362 C1520,1368 1548,1368 1558,1362 C1561,1355 1561,1340 1560,1328 Z" fill="#333"/>
<path d="M1512,1330 V1362 M1524,1330 V1366 M1536,1330 V1367 M1548,1330 V1365 M1507,1342 H1559 M1507,1353 H1560" stroke="#c5673a" stroke-width="1.2"/>
<path d="M1506,1358 C1515,1368 1550,1369 1561,1357" stroke="#f3c44a" stroke-width="2.5" fill="none"/>
<path d="M1532,1228 C1516,1228 1512,1245 1510,1262 C1507,1290 1506,1318 1515,1330 C1523,1338 1545,1338 1554,1330 C1562,1318 1563,1295 1559,1265 C1556,1243 1550,1228 1532,1228 Z" fill="#ffffff"/>
<path d="M1511,1262 C1506,1290 1505,1318 1514,1331 L1518,1332 C1510,1318 1510,1290 1514,1262 Z" fill="#a3233b"/>
<path d="M1503,1256 L1514,1240 L1516,1254 Z" fill="#c0583a"/>
<g fill="#4a9ef0"><rect x="1514" y="1371" width="3" height="3"/><rect x="1527" y="1375" width="3" height="3"/><rect x="1535" y="1369" width="3" height="3"/><rect x="1540" y="1382" width="3" height="3"/><rect x="1548" y="1374" width="3" height="3"/><rect x="1508" y="1383" width="3" height="3"/><rect x="1534" y="1388" width="3" height="3"/><rect x="1552" y="1364" width="3" height="3"/><rect x="1522" y="1380" width="3" height="3"/></g>
</svg>

<!-- separators -->
<div class="a" style="left:598px;top:180px;width:4px;height:760px;background:#151515"></div>
<div class="a" style="left:1946px;top:180px;width:4px;height:1386px;background:#151515"></div>
<div class="a" style="left:113px;top:940px;width:1833px;height:4px;background:#151515"></div>
<div class="a" style="left:1116px;top:944px;width:4px;height:622px;background:#151515"></div>
<!-- ===== STATUS ===== -->
<div class="a" style="left:113px;top:1565px;width:2686px;height:43.5px;background:#161616;border-radius:0 0 11px 11px"></div>
<div class="t" style="left:153px;top:1574px;font-size:25px;color:#bdbdbd">Realtime: Connected</div>
<svg style="left:112px;top:1564px" width="2690" height="46" viewBox="112 1564 2690 46">
<circle cx="131" cy="1586" r="13" fill="#bdbdbd"/><path d="M137,1597 L145,1602 L143,1592 Z" fill="#bdbdbd"/>
<path d="M131,1578 V1589" stroke="#161616" stroke-width="3.5" stroke-linecap="round"/><circle cx="131" cy="1594" r="2.2" fill="#161616"/>
<path d="M2590.5,1568 V1606 M2643,1568 V1606 M2695,1568 V1606 M2747,1568 V1606" stroke="#232323" stroke-width="1.5"/>
<!-- bug -->
<path d="M2608,1586 C2608,1580 2612,1577 2617,1577 C2622,1577 2626,1580 2626,1586 V1596 C2626,1601 2622,1604 2617,1604 C2612,1604 2608,1601 2608,1596 Z" fill="#a8a8a8"/>
<path d="M2611,1579 L2609,1576 M2623,1579 L2625,1576 M2608,1589 L2604,1586 L2605,1581 M2626,1589 L2630,1586 L2629,1581 M2608,1594 L2604,1594 L2603,1598 M2626,1594 L2630,1594 L2631,1598 M2609,1599 L2606,1602 L2606,1604 M2625,1599 L2628,1602 L2628,1604" stroke="#a8a8a8" stroke-width="2" fill="none"/>
<path d="M2603,1576 L2632,1605" stroke="#161616" stroke-width="4"/><path d="M2604,1577 L2631,1604" stroke="#a8a8a8" stroke-width="1.8"/>
<!-- db -->
<ellipse cx="2669" cy="1580" rx="12" ry="5" fill="#a8a8a8"/>
<path d="M2657,1584 V1590 A12,5 0 0 0 2681,1590 V1584 A12,5 0 0 1 2657,1584 Z M2657,1594 V1599 A12,5 0 0 0 2681,1599 V1594 A12,5 0 0 1 2657,1594 Z" fill="#a8a8a8"/>
<path d="M2656,1575 L2684,1605" stroke="#161616" stroke-width="4"/><path d="M2656,1575 L2684,1605" stroke="#a8a8a8" stroke-width="2"/>
<!-- light -->
<circle cx="2721" cy="1587.5" r="7" fill="#a8a8a8"/><path d="M2716.5,1595 H2725.5 C2725,1599 2723,1600 2721,1600 C2719,1600 2717,1599 2716.5,1595 Z" fill="#a8a8a8"/>
<path d="M2708,1586 A13.5,13.5 0 0 1 2732,1582 M2734,1594 A13.5,13.5 0 0 1 2710,1598" fill="none" stroke="#a8a8a8" stroke-width="2.2"/>
<path d="M2731,1576 L2735,1587 L2727,1584 Z M2709,1604 L2707,1593 L2714,1597 Z" fill="#a8a8a8"/>
<!-- check -->
<circle cx="2772.5" cy="1590" r="13" fill="none" stroke="#a8a8a8" stroke-width="2.2"/>
<path d="M2766,1590 L2771,1595 L2779,1585" fill="none" stroke="#a8a8a8" stroke-width="2.5"/>
</svg>

</div></body></html>
